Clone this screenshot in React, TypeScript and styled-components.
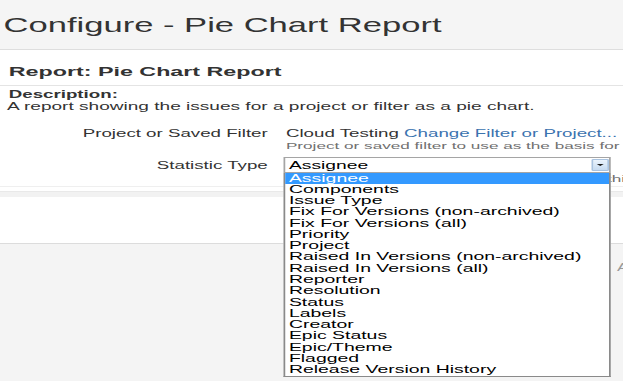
import styled, { createGlobalStyle } from 'styled-components';

// the reference is a horizontally stretched capture, so the page is laid out
// at its natural width and widened once at the root
const STRETCH = 1.75;

const GlobalStyle = createGlobalStyle`
  html, body {
    margin: 0;
    padding: 0;
    background: #f4f4f4;
    overflow: hidden;
  }
  body {
    font-family: "Liberation Sans", Arial, sans-serif;
    color: #333;
  }
`;

const Stage = styled.div`
  width: ${623 / STRETCH}px;
  height: 381px;
  transform: scaleX(${STRETCH});
  transform-origin: 0 0;
  display: flex;
  flex-direction: column;
  overflow: hidden;
`;

const Header = styled.header`
  height: 49px;
  flex: none;
  background: #f5f5f5;
  border-bottom: 1px solid #dedede;
  display: flex;
  align-items: center;
  padding-left: 2px;
`;

const Title = styled.h1`
  margin: 0;
  font-size: 19.75px;
  line-height: 24px;
  font-weight: normal;
  color: #333;
  white-space: nowrap;
`;

const Content = styled.main`
  flex: none;
  background: #fff;
  padding-top: 14px;
`;

const Heading = styled.h2`
  margin: 0;
  padding: 0 0 5px 5px;
  font-size: 13.3px;
  line-height: 16px;
  font-weight: bold;
  color: #333;
  border-bottom: 1px solid #e4e4e4;
  white-space: nowrap;
`;

const Description = styled.div`
  padding: 2px 0 0 5px;
  line-height: 12px;
`;

const DescLabel = styled.div`
  font-size: 10.7px;
  font-weight: bold;
`;

const DescText = styled.div`
  font-size: 10.9px;
  margin-left: -1px;
  white-space: nowrap;
`;

const Form = styled.div`
  display: grid;
  grid-template-columns: 153px 1fr;
  column-gap: 10.4px;
  row-gap: 5px;
  margin-top: 13.5px;
  align-items: start;
`;

const Label = styled.div<{ $tall?: boolean }>`
  text-align: right;
  font-size: 10.7px;
  line-height: ${(p) => (p.$tall ? '16px' : '14px')};
  color: #333;
  white-space: nowrap;
`;

const Field = styled.div`
  display: flex;
  flex-direction: column;
  min-width: 0;
`;

const ValueLine = styled.div`
  font-size: 10.7px;
  line-height: 14px;
  white-space: nowrap;
`;

const Link = styled.a`
  color: #3b73af;
  text-decoration: none;
`;

const Help = styled.div`
  font-size: 9.8px;
  line-height: 12px;
  color: #707070;
  white-space: nowrap;
`;

const SelectWrap = styled.div`
  position: relative;
  width: 187.4px;
  margin-left: -1.7px;
`;

const SelectBox = styled.div`
  height: 16px;
  box-sizing: border-box;
  border: 1px solid #a5a5a5;
  background: #fff;
  display: flex;
  align-items: center;
  padding-left: 2.4px;
  font-size: 11px;
  color: #000;
`;

const SelectValue = styled.span`
  flex: 1;
  white-space: nowrap;
`;

const ArrowButton = styled.span`
  width: 9.7px;
  height: 12px;
  box-sizing: border-box;
  border: 1px solid #a9c3e0;
  border-radius: 1px;
  background: linear-gradient(#eaf3fc, #c6dbf1);
  display: flex;
  align-items: center;
  justify-content: center;
  margin-right: 0.3px;
`;

const Caret = styled.span`
  width: 0;
  height: 0;
  border-left: 2px solid transparent;
  border-right: 2px solid transparent;
  border-top: 2.5px solid #1a1a1a;
`;

const Options = styled.ul`
  position: absolute;
  top: 100%;
  left: 0;
  right: 0;
  z-index: 10;
  margin: 0;
  padding: 0;
  list-style: none;
  background: #fff;
  border: 1px solid #8a8a8a;
  border-top: none;
`;

const Option = styled.li<{ $active?: boolean }>`
  font-size: 11.1px;
  line-height: 11.28px;
  padding-left: 2.4px;
  white-space: nowrap;
  color: ${(p) => (p.$active ? '#fff' : '#000')};
  background: ${(p) => (p.$active ? '#3399ff' : 'transparent')};
`;

const ButtonBar = styled.div`
  margin-top: 1px;
  border-top: 1px solid #efefef;
  padding-top: 4px;
`;

const Strip = styled.div`
  height: 6px;
  background: #f2f2f2;
  border-top: 1px solid #e9e9e9;
  box-sizing: border-box;
`;

const Buttons = styled.div`
  height: 46px;
  border-bottom: 1px solid #dcdcdc;
  display: flex;
  align-items: center;
  gap: 4px;
  padding-left: 163.4px;
`;

const Button = styled.button`
  font-family: inherit;
  font-size: 10.7px;
  padding: 2px 6px;
  border: 1px solid #ccc;
  border-radius: 3px;
  background: #f2f2f2;
  color: #333;
`;

const Footer = styled.footer`
  flex: 1;
  background: #f4f4f4;
  padding: 18px 0 0 352.5px;
  font-size: 10px;
  line-height: 12px;
  color: #9a9a9a;
  white-space: nowrap;
`;

const statistics = [
  'Assignee',
  'Components',
  'Issue Type',
  'Fix For Versions (non-archived)',
  'Fix For Versions (all)',
  'Priority',
  'Project',
  'Raised In Versions (non-archived)',
  'Raised In Versions (all)',
  'Reporter',
  'Resolution',
  'Status',
  'Labels',
  'Creator',
  'Epic Status',
  'Epic/Theme',
  'Flagged',
  'Release Version History',
];

const App = () => {
  const selected = statistics[0];

  return (
    <>
      <GlobalStyle />
      <Stage>
        <Header>
          <Title>Configure - Pie Chart Report</Title>
        </Header>
        <Content>
          <Heading>Report: Pie Chart Report</Heading>
          <Description>
            <DescLabel>Description:</DescLabel>
            <DescText>A report showing the issues for a project or filter as a pie chart.</DescText>
          </Description>
          <Form>
            <Label>Project or Saved Filter</Label>
            <Field>
              <ValueLine>
                Cloud Testing <Link href="#">Change Filter or Project...</Link>
              </ValueLine>
              <Help>Project or saved filter to use as the basis for the graph.</Help>
            </Field>
            <Label $tall>Statistic Type</Label>
            <Field>
              <SelectWrap>
                <SelectBox>
                  <SelectValue>{selected}</SelectValue>
                  <ArrowButton>
                    <Caret />
                  </ArrowButton>
                </SelectBox>
                <Options>
                  {statistics.map((s) => (
                    <Option key={s} $active={s === selected}>
                      {s}
                    </Option>
                  ))}
                </Options>
              </SelectWrap>
              <Help>Select which type of statistic to display for this filter</Help>
            </Field>
          </Form>
          <ButtonBar>
            <Strip />
            <Buttons>
              <Button>Next</Button>
              <Button>Cancel</Button>
            </Buttons>
          </ButtonBar>
        </Content>
        <Footer>Atlassian JIRA</Footer>
      </Stage>
    </>
  );
};

export default App;
